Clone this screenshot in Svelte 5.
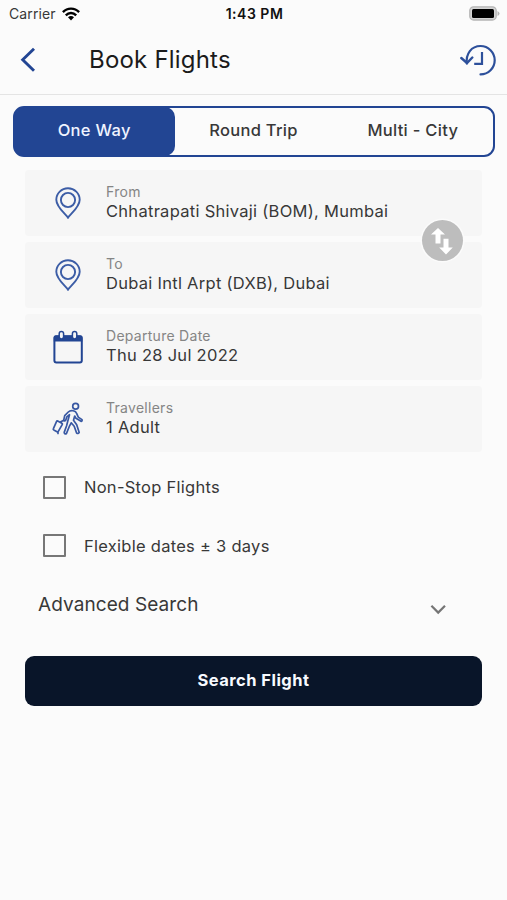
<script>
  const tabs = ['One Way', 'Round Trip', 'Multi - City'];
  const fields = [
    { icon: 'pin', label: 'From', value: 'Chhatrapati Shivaji (BOM), Mumbai' },
    { icon: 'pin', label: 'To', value: 'Dubai Intl Arpt (DXB), Dubai' },
    { icon: 'calendar', label: 'Departure Date', value: 'Thu 28 Jul 2022' },
    { icon: 'traveller', label: 'Travellers', value: '1 Adult' }
  ];
  const options = ['Non-Stop Flights', 'Flexible dates ± 3 days'];
  let active = $state(0);
  let checked = $state([false, false]);
</script>

<div class="screen">
  <div class="status">
    <div class="carrier">
      <span>Carrier</span>
      <svg width="18" height="14" viewBox="0 0 18 14" fill="none" stroke="#000" stroke-width="2.4">
        <path d="M.9 5.1C5.4.4 12.6.4 17.1 5.1" />
        <path d="M3.8 8.3C6.8 5.3 11.2 5.3 14.2 8.3" />
        <path d="M6 10.3Q9 7.6 12 10.3L9 13.4Z" fill="#000" stroke="none" />
      </svg>
    </div>
    <span class="clock">1:43 PM</span>
    <svg class="battery" width="31" height="15" viewBox="0 0 31 15">
      <rect x=".8" y=".8" width="26.4" height="13.2" rx="3.8" fill="#d4d4d4" stroke="#b5b5b5" stroke-width="1.3" />
      <rect x="3" y="3" width="22" height="9" rx="1.5" fill="#000" />
      <path d="M28.5 5v5q2-1 2-2.500t-2-2.500Z" fill="#b5b5b5" />
    </svg>
  </div>

  <header>
    <svg class="back" width="16" height="25" viewBox="0 0 16 25" fill="none" stroke="#224593" stroke-width="2.9">
      <path d="M14 1.800 2.700 12.800 14 23.800" />
    </svg>
    <h1>Book Flights</h1>
    <svg class="history" width="37" height="32" viewBox="0 0 37 32" fill="none" stroke="#2d509b" stroke-width="2.200">
      <path d="M6.900 19.500C5.600 9.700 11.500 2 20.500 2a14.200 14.200 0 0 1 0 28.400" stroke-linecap="round" />
      <path d="M1.300 14 7 19l5.300-5.500" stroke-width="2.400" stroke-linecap="round" />
      <path d="M22 8v11.800h-7.800" />
    </svg>
  </header>

  <nav>
    {#each tabs as tab, i}
      <button class="tab" class:active={active === i} onclick={() => (active = i)}>{tab}</button>
    {/each}
  </nav>

  <section class="fields">
    {#each fields as field}
      <div class="field">
        <div class="icon">
          {#if field.icon === 'pin'}
            <svg width="26" height="32" viewBox="0 0 26 32" fill="none" stroke="#3c5da6" stroke-width="1.900">
              <path d="M13 30.700C10.500 27 1.300 20 1.300 12.700a11.700 11.500 0 0 1 23.400 0C24.700 20 15.500 27 13 30.700Z" />
              <circle cx="13" cy="13" r="7.100" />
            </svg>
          {:else if field.icon === 'calendar'}
            <svg width="30" height="34" viewBox="0 0 30 34">
              <rect x="1.400" y="6.200" width="27.400" height="26.300" rx="2" fill="none" stroke="#224593" stroke-width="2" />
              <path d="M.8 11.500V7q0-1.500 1.500-1.500h25.500q1.500 0 1.500 1.500v4.500Z" fill="#224593" />
              <g fill="#f5f5f5" stroke="#224593" stroke-width="1.500">
                <rect x="6.200" y="1.500" width="4.400" height="7.500" rx="2.200" />
                <rect x="19.400" y="1.500" width="4.400" height="7.500" rx="2.200" />
              </g>
            </svg>
          {:else}
            <svg width="32" height="34" viewBox="0 0 32 34" fill="none" stroke="#3858a3" stroke-width="1.700" stroke-linejoin="round" stroke-linecap="round">
              <circle cx="23.600" cy="4.300" r="2.900" />
              <path d="M21.500 8.800q-3.200-.8-5.200 1.200l-3.600 3.600-1 4.500q.5 1.400 1.900.5l1.200-3.700 2.700-2.200-1.700 6.300-1.200 4.700-2.400 6.700q.2 2 2.200 1.200l3.200-7.800 1.600-3 3 3.500 2.400 6.700q1.700 1.200 2.600-.6l-2.500-7.700-3.200-4.400 1.200-4.300 1.300 2.300 5 3q1.500-.1 1-1.700l-3.700-2.500-1.800-4q-.7-1.900-3-2.300Z" />
              <path d="M5.700 18.900 9.800 21.200q.9.500.4 1.400L6.300 29.400q-.5.800-1.300.3L1.800 27.900q-.8-.5-.4-1.300L4.600 19.400q.4-.9 1.100-.5ZM8.300 20l3.500-1.800M6 30v1.500" />
            </svg>
          {/if}
        </div>
        <div class="copy">
          <span class="label">{field.label}</span>
          <span class="value">{field.value}</span>
        </div>
      </div>
    {/each}
    <button class="swap" aria-label="Swap airports">
      <svg width="24" height="28" viewBox="0 0 24 28" fill="#fff">
        <path d="M8 1 15 7.500H10.500v9H5.500V7.500H1ZM16 27.500l-6.800-7H13.500v-8.700h5V20.500H22.800Z" />
      </svg>
    </button>
  </section>

  <section class="options">
    {#each options as option, i}
      <label><input type="checkbox" bind:checked={checked[i]} /><span>{option}</span></label>
    {/each}
  </section>

  <div class="advanced">
    <span>Advanced Search</span>
    <svg width="16" height="11" viewBox="0 0 16 11" fill="none" stroke="#757575" stroke-width="2.200">
      <path d="m1.400 1.800 6.800 6.800 6.800-6.800" />
    </svg>
  </div>
  <button class="search">Search Flight</button>
</div>

<style>
  :global(body) { margin: 0; background: #fbfbfb; }
  .screen { box-sizing: border-box; width: 507px; height: 900px; overflow: hidden; background: #fbfbfb; color: #383838; font-family: Inter, "Liberation Sans", sans-serif; }
  svg { display: block; flex: none; }
  button { border: 0; padding: 0; margin: 0; font: inherit; color: inherit; background: none; }
  .status { box-sizing: border-box; display: grid; grid-template-columns: 1fr auto 1fr; align-items: center; height: 27px; padding: 0 7px 0 9px; font-size: 14px; }
  .carrier { display: flex; align-items: center; gap: 6px; letter-spacing: .1px; }
  .clock { font-weight: 600; font-size: 14px; letter-spacing: .5px; color: #111; }
  .battery { justify-self: end; }
  header { box-sizing: border-box; height: 68px; border-bottom: 1px solid #e4e4e4; display: flex; align-items: center; padding: 0 10px 2px 20px; }
  h1 { margin: 0 auto 0 53px; font-size: 24px; line-height: 30px; font-weight: 400; letter-spacing: .2px; color: #1b1b1b; }
  nav { box-sizing: border-box; display: flex; width: 482px; height: 51px; margin: 11px 0 0 13px; border: 2px solid #224593; border-radius: 11px; background: #fbfbfb; }
  .tab { flex: 1; font-size: 16.500px; font-weight: 500; letter-spacing: .3px; padding: 0 1px 3px 0; }
  .active { background: #224593; color: #f0f4ff; border-radius: 9px; box-shadow: 0 0 0 1px #224593; }
  .fields { position: relative; width: 457px; margin: 13px 0 0 25px; display: flex; flex-direction: column; gap: 6px; }
  .field { display: flex; align-items: center; height: 66px; border-radius: 4px; background: #f6f6f6; }
  .icon { width: 81px; display: flex; justify-content: center; padding-left: 5px; box-sizing: border-box; }
  .copy { display: flex; flex-direction: column; padding-bottom: 2px; }
  .label { font-size: 14px; line-height: 18px; letter-spacing: .28px; color: #858585; }
  .value { font-size: 16.500px; line-height: 20px; letter-spacing: .28px; white-space: nowrap; }
  .swap { position: absolute; left: 396.500px; top: 50px; width: 41px; height: 41px; border-radius: 50%; background: #bdbdbd; box-shadow: 0 0 0 1.500px #fbfbfb; display: grid; place-items: center; }
  .options { display: flex; flex-direction: column; gap: 34.500px; margin: 23px 0 0 43px; }
  label { display: flex; align-items: center; gap: 18px; height: 24px; font-size: 16.500px; letter-spacing: .27px; }
  input { appearance: none; box-sizing: border-box; width: 23px; height: 23px; margin: 0; border: 2px solid #777; border-radius: 1px; }
  input:checked { background: #224593; }
  .advanced { display: flex; justify-content: space-between; align-items: center; height: 26px; margin: 34px 61px 0 38px; font-size: 19px; letter-spacing: .08px; }
  .advanced svg { margin-top: 10px; }
  .search { display: block; width: 457px; height: 50px; margin: 38px 0 0 25px; padding-bottom: 1px; border-radius: 9px; background: #091529; color: #f7faff; font-size: 16.500px; letter-spacing: .45px; font-weight: 700; }
</style>
